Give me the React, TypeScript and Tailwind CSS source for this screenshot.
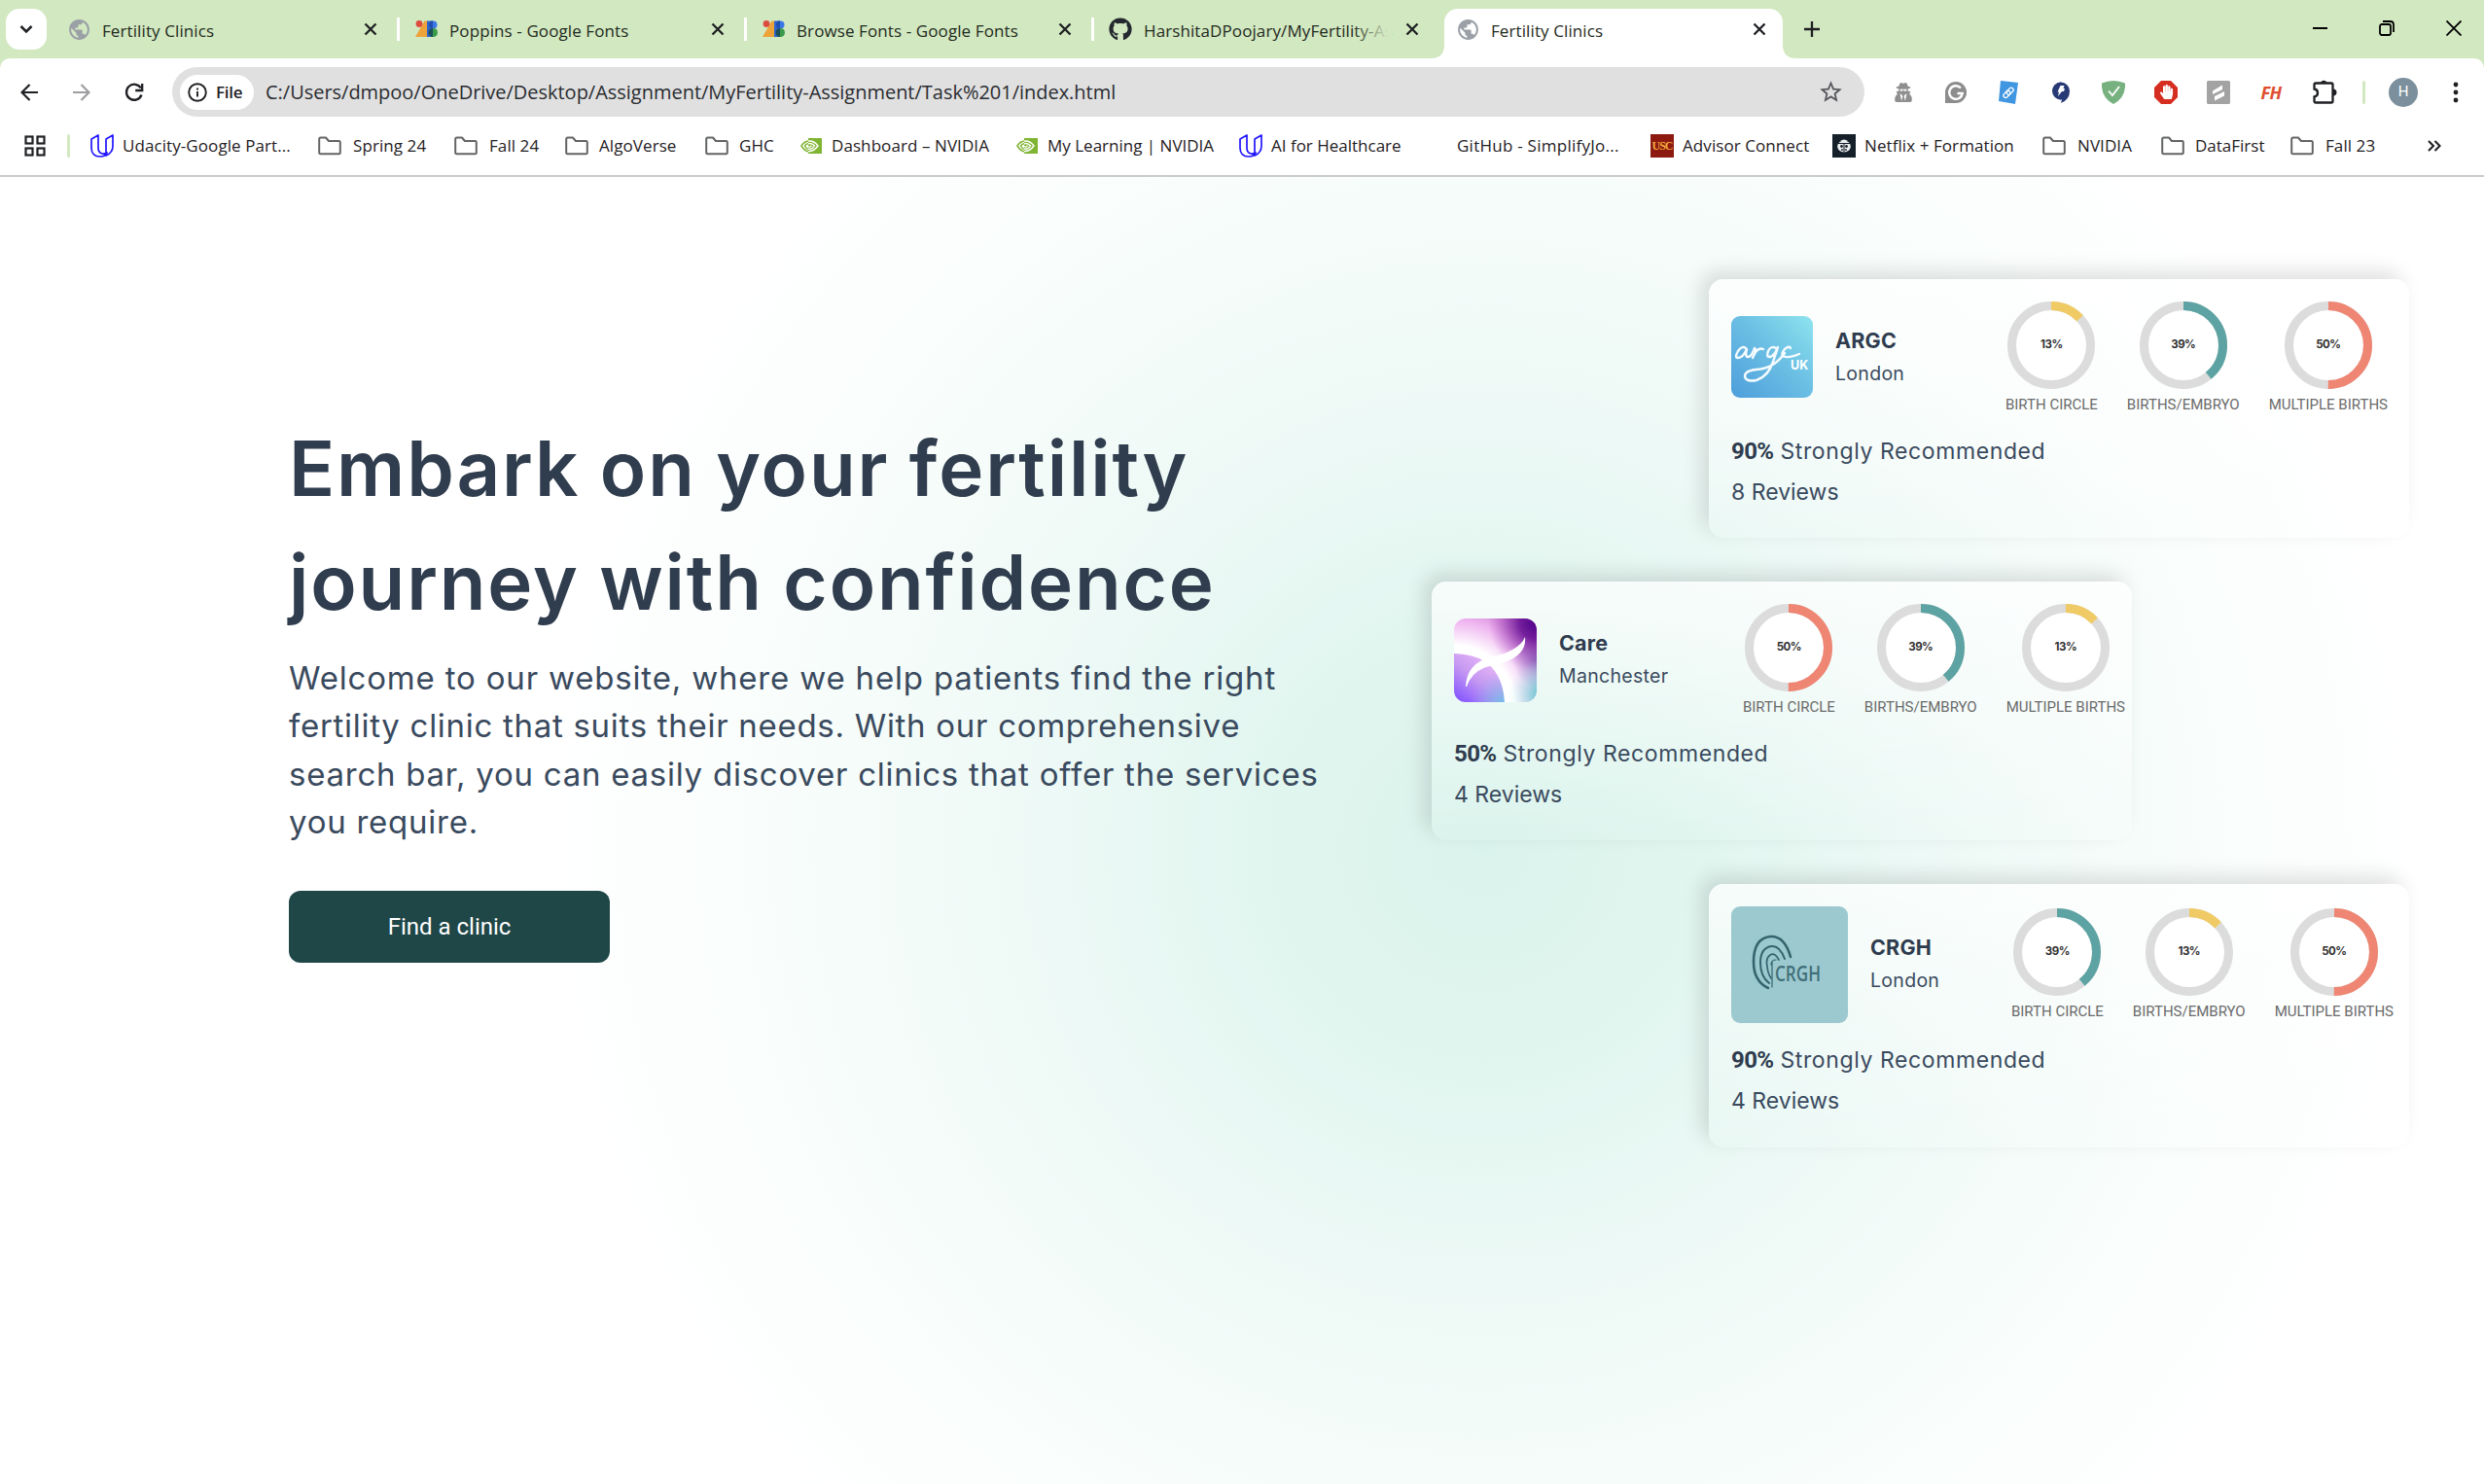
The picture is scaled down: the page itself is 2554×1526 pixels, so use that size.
import type { ReactNode } from "react";
import { FaGithub, FaUserSecret, FaHandPaper } from "react-icons/fa";
import { MdPublic, MdStarBorder } from "react-icons/md";

/* ---------- browser icons ---------- */

function Close() {
  return (
    <svg viewBox="0 0 14 14" className="size-[14px] shrink-0 text-[#1f2023]">
      <path d="M1.5 1.5l11 11M12.5 1.5l-11 11" stroke="currentColor" strokeWidth="2.3" fill="none" />
    </svg>
  );
}

function GoogleFontsIcon() {
  return (
    <svg viewBox="0 0 24 24" className="h-6 w-6 shrink-0">
      <path d="M9.500 3.500h3v16.500H0z" fill="#eda23a" />
      <circle cx="4" cy="6.500" r="3.400" fill="#dd4b3e" />
      <rect x="12" y="3.500" width="6" height="16.500" fill="#2f66cf" />
      <circle cx="18.500" cy="7.500" r="4" fill="#3b78e7" />
      <circle cx="18.500" cy="15.500" r="4.500" fill="#3a9a4b" />
      <path d="M18 11v9a4.500 4.500 0 010-9z" fill="#1d4f5a" />
      <path d="M18 3.500v8a4 4 0 010-8z" fill="#1f4fae" />
    </svg>
  );
}

function FolderIcon() {
  return (
    <svg viewBox="0 0 24 20" className="h-5 w-6 shrink-0" fill="none" stroke="#636466" strokeWidth="2" strokeLinejoin="round">
      <path d="M1.200 3q0-1.500 1.500-1.500H8l3 3.500h10.500q1.300 0 1.300 1.300V17q0 1.200-1.300 1.200h-19Q1.200 18.200 1.200 17z" />
    </svg>
  );
}

function UdacityIcon() {
  return (
    <svg viewBox="0 0 24 24" className="size-6 shrink-0" fill="none" stroke="#2015ff" strokeWidth="1.700" strokeLinejoin="round" strokeLinecap="round">
      <path d="M1 5l7-4v13q0 5 4 6 2 .500 5-1-1.500 4-7 4-9 0-9-9zM16 19V5l7-4v11q0 7-7 10" />
    </svg>
  );
}

function NvidiaIcon() {
  return (
    <svg viewBox="0 0 24 24" className="size-6 shrink-0" fill="none">
      <path d="M9 4h14v16H9z" fill="#80b534" />
      <path d="M9 6Q4 7 1 12q3 5 8 6.500z" fill="#fff" />
      <path d="M9.500 7Q4.500 7.500 2 12q3 5 7.500 6" stroke="#80b534" strokeWidth="1.600" />
      <path d="M9 7.200Q15 6.500 19 12q-4 5.500-10 5.800" stroke="#fff" strokeWidth="1.500" />
      <path d="M9.500 9.700Q6.500 10 5.500 12q1.500 3 4.500 3.300 3.500 0 5.500-3.300-2.500-3-6-2.300" stroke="#fff" strokeWidth="1.400" />
      <path d="M9 9.700Q6.500 10 5.500 12q1.500 3 3.500 3.300" stroke="#80b534" strokeWidth="1.500" />
      <path d="M9 12.500q2 1.500 3.500-.800" stroke="#fff" strokeWidth="1.300" />
    </svg>
  );
}

function UscIcon() {
  return (
    <span className="grid size-6 shrink-0 place-items-center bg-[#8c1a11] font-['Liberation_Serif'] text-[12px] font-bold tracking-[-1px] text-[#f2a93b]">
      USC
    </span>
  );
}

function NetflixFormationIcon() {
  return (
    <svg viewBox="0 0 24 24" className="size-6 shrink-0">
      <rect width="24" height="24" fill="#15202b" />
      <ellipse cx="12" cy="12.500" rx="6.800" ry="6" fill="#eceff1" />
      <path d="M8 7q4-3 8 0z" fill="#eceff1" />
      <path d="M6 9.500h12M12 9.500v9" stroke="#15202b" strokeWidth="1.100" />
      <circle cx="9.500" cy="12.500" r="1.400" fill="#15202b" />
      <circle cx="14.500" cy="12.500" r="1.400" fill="#15202b" />
      <circle cx="10" cy="16" r=".9" fill="#15202b" />
      <circle cx="14" cy="16" r=".9" fill="#15202b" />
    </svg>
  );
}

/* ---------- tab strip ---------- */

function Tab({ icon, title, fade = false, divider = true }: { icon: ReactNode; title: string; fade?: boolean; divider?: boolean }) {
  return (
    <div className="flex h-[42px] w-[357px] shrink-0 items-center">
      <span className="flex w-[35px] shrink-0">{icon}</span>
      <span className="relative mt-[3px] w-[251px] whitespace-nowrap">
        {title}
        {fade && <span className="absolute inset-y-0 -right-1 w-10 bg-gradient-to-r from-[#d2e8c1]/0 to-[#d2e8c1] to-90%" />}
      </span>
      <span className="ml-[18px]"><Close /></span>
      {divider && <span className="ml-[20px] h-6 w-[3px] bg-white" />}
    </div>
  );
}

function TabStrip() {
  const globe = <MdPublic className="-ml-px size-[25px] text-[#9aa0a6]" />;
  return (
    <div className="flex h-[60px] items-start bg-[#d2e8c1] pt-[9px] pl-[6px] text-[17px] tracking-[0.1px] text-[#1f2a20]">
      <span className="mr-[22px] grid size-[42px] shrink-0 place-items-center rounded-[14px] bg-white">
        <svg viewBox="0 0 14 10" className="mt-[-1px] h-[10px] w-[14px]">
          <path d="M1.500 2l5.500 5.500L12.500 2" fill="none" stroke="#1f2023" strokeWidth="2.500" />
        </svg>
      </span>
      <Tab icon={globe} title="Fertility Clinics" />
      <Tab icon={<GoogleFontsIcon />} title="Poppins - Google Fonts" />
      <Tab icon={<GoogleFontsIcon />} title="Browse Fonts - Google Fonts" />
      <Tab icon={<FaGithub className="ml-[-1px] size-6 text-[#24292f]" />} title="HarshitaDPoojary/MyFertility-As" fade divider={false} />
      <div className="relative -ml-[13px] h-[51px] w-[348px] shrink-0 rounded-t-[14px] bg-white pl-[13px]">
        <svg viewBox="0 0 14 14" className="absolute bottom-0 -left-[14px] size-[14px]"><path d="M14 0v14H0Q14 14 14 0z" fill="#fff" /></svg>
        <svg viewBox="0 0 14 14" className="absolute -right-[14px] bottom-0 size-[14px]"><path d="M0 0v14h14Q0 14 0 0z" fill="#fff" /></svg>
        <Tab icon={globe} title="Fertility Clinics" divider={false} />
      </div>
      <svg viewBox="0 0 16 16" className="mt-[13px] ml-[22px] size-4 shrink-0"><path d="M8 0v16M0 8h16" stroke="#1f2023" strokeWidth="2.300" /></svg>
      <div className="mt-[12px] mr-[23px] ml-auto flex items-center gap-[53px]">
        <svg viewBox="0 0 15 16" className="h-4 w-[15px]"><path d="M0 8h15" stroke="#000" strokeWidth="2" /></svg>
        <svg viewBox="0 0 16 16" className="size-4" fill="none" stroke="#000" strokeWidth="1.800">
          <rect x="1" y="4" width="11" height="11" rx="2" />
          <path d="M4 1h7.500q3.500 0 3.500 3.500V12" />
        </svg>
        <svg viewBox="0 0 16 16" className="size-4"><path d="M.5.5l15 15M15.500.5l-15 15" stroke="#000" strokeWidth="1.800" /></svg>
      </div>
    </div>
  );
}

/* ---------- toolbar ---------- */

function Extensions() {
  return (
    <div className="flex items-center gap-[30px]">
      <FaUserSecret className="size-6 p-[2px] text-[#8f8f8f]" />
      <svg viewBox="0 0 24 24" className="size-6">
        <path d="M12 1a11 11 0 0111 11 11 11 0 01-11 11H1V12A11 11 0 0112 1z" fill="#8d8d8d" />
        <path d="M17 7.500A6.800 6.800 0 1018.700 13H13.500" fill="none" stroke="#fff" strokeWidth="2.400" />
      </svg>
      <svg viewBox="0 0 24 24" className="size-6">
        <path d="M4 0l18 2-3 22-17-3z" fill="#4096e0" />
        <g transform="rotate(-45 12 12)" fill="none" stroke="#fff" strokeWidth="1.300">
          <rect x="5.500" y="10" width="8" height="4.500" rx="2.200" />
          <rect x="10" y="10" width="8" height="4.500" rx="2.200" />
        </g>
      </svg>
      <svg viewBox="0 0 24 24" className="size-6">
        <path d="M12 1.500a9 9 0 019 9q0 9-9 12.500l1-3.500a9 9 0 01-1-18z" fill="#283a75" />
        <path d="M12 1.500a9 9 0 000 18z" fill="#283a75" />
        <path d="M11.500 5h4l-1 3h1.500l-1 3h-2l-4 5 1-4.500H8.500z" fill="#fff" />
      </svg>
      <svg viewBox="0 0 24 24" className="size-6">
        <path d="M12 0q6 0 12 2.500Q25 17 12 24-1 17 0 2.500 6 0 12 0z" fill="#77b17f" />
        <path d="M7 10.500l4 4.500 7-9" fill="none" stroke="#fff" strokeWidth="1.800" />
      </svg>
      <span className="grid size-6 place-items-center">
        <svg viewBox="0 0 24 24" className="col-start-1 row-start-1 size-6"><path d="M7 0h10l7 7v10l-7 7H7l-7-7V7z" fill="#d52d20" /></svg>
        <FaHandPaper className="col-start-1 row-start-1 size-[15px] text-white" />
      </span>
      <svg viewBox="0 0 24 24" className="size-6">
        <rect width="24" height="24" rx="1.500" fill="#a3a3a3" />
        <path d="M6 10.500l10-6v4.500L6 14zM8 16l10-5v4.500l-10 5z" fill="#fff" />
      </svg>
      <span className="grid h-6 w-6 place-items-center font-['Open_Sans'] text-[18px] leading-6 font-bold tracking-[-0.5px] text-[#e04e32] italic">FH</span>
      <svg viewBox="0 0 26 26" className="h-[26px] w-[26px] -translate-y-px text-[#1f2023]">
        <path d="M4 4.500H20q1.500 0 1.500 1.500v17q0 1.500-1.500 1.500H4q-1.500 0-1.500-1.500v-4.500Q6 18 6 14.500T2.500 10.500V6Q2.500 4.500 4 4.500z" fill="none" stroke="currentColor" strokeWidth="2.300" />
        <path d="M9 4.500a3.300 3.300 0 016.500 0zM22 10.500a3.500 3.500 0 010 7z" fill="currentColor" />
      </svg>
    </div>
  );
}

function Toolbar() {
  return (
    <div className="bg-[#d2e8c1]">
      <div className="flex h-[69px] items-center rounded-t-[10px] bg-white pl-[21px]">
        <svg viewBox="0 0 18 18" className="size-[18px]" fill="none" stroke="#1f2023" strokeWidth="2.200"><path d="M18 9H2M9.500 1L1.500 9l8 8" /></svg>
        <svg viewBox="0 0 18 18" className="ml-[36px] size-[18px]" fill="none" stroke="#9d9ea0" strokeWidth="2.200"><path d="M0 9h16M8.500 1l8 8-8 8" /></svg>
        <svg viewBox="0 0 20 20" className="ml-[35px] size-5" fill="none" stroke="#1f2023" strokeWidth="2.300">
          <path d="M17.500 12.500A8 8 0 1116.800 5.500" />
          <path d="M18.200 1v7h-7" />
        </svg>
        <div className="ml-[29px] flex h-[51px] w-[1740px] items-center rounded-full bg-[#e0e0e0] pr-[21px] pl-[8px]">
          <span className="flex h-[36px] w-[76px] items-center rounded-full bg-white pl-[8px]">
            <svg viewBox="0 0 20 20" className="size-5" fill="none" stroke="#1f2023" strokeWidth="1.900">
              <circle cx="10" cy="10" r="8.800" />
              <path d="M10 9v5.500M10 5.500v2" />
            </svg>
            <span className="ml-[9px] text-[17px] font-semibold tracking-[-0.3px] text-[#1f2023]">File</span>
          </span>
          <span className="ml-[12px] text-[20px] tracking-[-0.02px] text-[#2a2c30]">C:/Users/dmpoo/OneDrive/Desktop/Assignment/MyFertility-Assignment/Task%201/index.html</span>
          <MdStarBorder className="ml-auto size-[27px] text-[#55575b]" />
        </div>
        <div className="ml-[28px]"><Extensions /></div>
        <span className="ml-[26px] h-6 w-[3px] rounded bg-[#d2e8c1]" />
        <span className="ml-[24px] grid size-[30px] place-items-center rounded-full bg-[#7b8f9c] font-[Roboto] text-[15px] text-white">H</span>
        <svg viewBox="0 0 6 22" className="ml-[36px] h-[22px] w-[6px]" fill="#1f2023">
          <circle cx="3" cy="3" r="2.400" /><circle cx="3" cy="11" r="2.400" /><circle cx="3" cy="19" r="2.400" />
        </svg>
      </div>
    </div>
  );
}

/* ---------- bookmarks ---------- */

function Bookmark({ icon, label, width }: { icon: ReactNode; label: string; width: string }) {
  return (
    <div className={`flex shrink-0 items-center whitespace-nowrap ${width}`}>
      {icon}
      {label}
    </div>
  );
}

function Bookmarks() {
  return (
    <div className="flex h-[53px] items-center border-b-2 border-[#cbcbcb] bg-white pb-[9px] pl-[25px] text-[17px] tracking-[0.08px] text-[#1f2023]">
      <svg viewBox="0 0 22 22" className="size-[22px] shrink-0" fill="none" stroke="#1f2023" strokeWidth="2.200">
        <rect x="1.500" y="1.500" width="7" height="7" /><rect x="13.500" y="1.500" width="7" height="7" />
        <rect x="1.500" y="13.500" width="7" height="7" /><rect x="13.500" y="13.500" width="7" height="7" />
      </svg>
      <span className="mr-[21px] ml-[22px] h-6 w-[3px] shrink-0 rounded bg-[#d2e8c1]" />
      <Bookmark icon={<UdacityIcon />} label="Udacity-Google Part..." width="w-[234px] gap-[9px]" />
      <Bookmark icon={<FolderIcon />} label="Spring 24" width="w-[140px] gap-[12px]" />
      <Bookmark icon={<FolderIcon />} label="Fall 24" width="w-[114px] gap-[12px]" />
      <Bookmark icon={<FolderIcon />} label="AlgoVerse" width="w-[144px] gap-[11px]" />
      <Bookmark icon={<FolderIcon />} label="GHC" width="w-[97px] gap-[11px]" />
      <Bookmark icon={<NvidiaIcon />} label="Dashboard – NVIDIA" width="w-[222px] gap-[9px]" />
      <Bookmark icon={<NvidiaIcon />} label="My Learning | NVIDIA" width="w-[230px] gap-[9px] tracking-normal" />
      <Bookmark icon={<UdacityIcon />} label="AI for Healthcare" width="w-[190px] gap-[9px] tracking-normal" />
      <Bookmark icon={<span className="w-6" />} label="GitHub - SimplifyJo..." width="w-[233px] gap-[10px] tracking-[0.25px]" />
      <Bookmark icon={<UscIcon />} label="Advisor Connect" width="w-[187px] gap-[9px]" />
      <Bookmark icon={<NetflixFormationIcon />} label="Netflix + Formation" width="w-[216px] gap-[9px]" />
      <Bookmark icon={<FolderIcon />} label="NVIDIA" width="w-[122px] gap-[12px]" />
      <Bookmark icon={<FolderIcon />} label="DataFirst" width="w-[133px] gap-[11px] tracking-normal" />
      <Bookmark icon={<FolderIcon />} label="Fall 23" width="w-[141px] gap-[12px]" />
      <svg viewBox="0 0 14 12" className="h-3 w-[14px]" fill="none" stroke="#1f2023" strokeWidth="2.100"><path d="M1 1l5 5-5 5M7.500 1l5 5-5 5" /></svg>
    </div>
  );
}

/* ---------- clinic logos ---------- */

function ArgcLogo() {
  return (
    <svg viewBox="0 0 84 84" className="mt-[-2px] size-[84px] shrink-0 rounded-[9px]">
      <defs>
        <linearGradient id="argc" x1="0" y1="1" x2="1" y2="0">
          <stop offset="0" stopColor="#4d9edb" />
          <stop offset=".55" stopColor="#6cc0e4" />
          <stop offset="1" stopColor="#8ee4ee" />
        </linearGradient>
      </defs>
      <rect width="84" height="84" fill="url(#argc)" />
      <g fill="none" stroke="#f4fbff" strokeWidth="2.400" strokeLinecap="round" strokeLinejoin="round">
        <path d="M15 33q-4-3-8 3-4 7 0 7 5 0 9-9-2 8 1 8 4 0 7-9 2 1 1 4 4-5 8-3" />
        <path d="M25 37l-3 6M46 33q-5-3-8 3-2 6 1 6 5 0 9-10l-5 15q-5 15-17 19-11 2-12-4 0-6 12-7 18-1 29-17" />
        <path d="M61 33q-1-3-6 1-4 5-2 7 5 3 17-2" />
      </g>
      <text x="61" y="55" fill="#fff" className="font-[Inter] text-[12.5px] font-bold">UK</text>
    </svg>
  );
}

function CareLogo() {
  return (
    <svg viewBox="0 0 85 86" className="h-[86px] w-[85px] shrink-0 rounded-[12px]">
      <defs>
        <radialGradient id="careTop" gradientUnits="userSpaceOnUse" cx="0" cy="90" r="125">
          <stop offset=".5" stopColor="#ffffff" />
          <stop offset=".7" stopColor="#efb6f0" />
          <stop offset="1" stopColor="#b04cb8" />
        </radialGradient>
        <radialGradient id="carePurple" gradientUnits="userSpaceOnUse" cx="85" cy="4" r="50">
          <stop offset="0" stopColor="#4b0088" />
          <stop offset=".35" stopColor="#6a1496" stopOpacity=".9" />
          <stop offset="1" stopColor="#b14fc0" stopOpacity="0" />
        </radialGradient>
        <radialGradient id="careTeal" gradientUnits="userSpaceOnUse" cx="92" cy="78" r="36">
          <stop offset="0" stopColor="#43c6c6" />
          <stop offset="1" stopColor="#b5e9ea" stopOpacity="0" />
        </radialGradient>
        <radialGradient id="careEdge" gradientUnits="userSpaceOnUse" cx="90" cy="42" r="30">
          <stop offset="0" stopColor="#6a5fb0" stopOpacity=".9" />
          <stop offset="1" stopColor="#8a7ac0" stopOpacity="0" />
        </radialGradient>
        <linearGradient id="careDisc" x1="0" y1="1" x2=".8" y2="0">
          <stop offset="0" stopColor="#7c4dff" />
          <stop offset=".5" stopColor="#c79af2" />
          <stop offset="1" stopColor="#f3c0f7" />
        </linearGradient>
        <radialGradient id="careBlue" gradientUnits="userSpaceOnUse" cx="52" cy="88" r="34">
          <stop offset="0" stopColor="#6ebfe6" />
          <stop offset="1" stopColor="#8fa8ee" stopOpacity="0" />
        </radialGradient>
      </defs>
      <rect width="85" height="86" fill="url(#careTop)" />
      <rect width="85" height="86" fill="url(#careEdge)" />
      <rect width="85" height="86" fill="url(#carePurple)" />
      <rect width="85" height="86" fill="url(#careTeal)" />
      <path d="M0 35Q50 36 53 86H0z" fill="url(#careDisc)" />
      <path d="M0 35Q50 36 53 86H0z" fill="url(#careBlue)" />
      <path d="M0 35Q50 36 53 86" fill="none" stroke="#fff" strokeWidth="2" />
      <path d="M12 70Q13 48 34 41 67 34 73 19 75 37 52 45 40 48 33 50 18 55 13 70z" fill="#fff" />
    </svg>
  );
}

function CrghLogo() {
  return (
    <svg viewBox="0 0 120 120" className="size-[120px] shrink-0 rounded-[9px]">
      <rect width="120" height="120" fill="#9cc9cf" />
      <g fill="none" stroke="#35646f" strokeLinecap="round">
        <path d="M61 52Q55 30 40 31 23 33 23 57q0 20 15 27" strokeWidth="2.600" />
        <path d="M55 54Q50 40 41 41 30 43 30 58q0 14 9 21" strokeWidth="2" />
        <path d="M49 55q-4-8-9-5-5 4-3 12 1 8 4 12" strokeWidth="1.700" />
        <path d="M42 57v26M46 55q-5 0-5 5" strokeWidth="1.200" />
      </g>
      <text x="45" y="77" fill="#416f79" textLength="47" lengthAdjust="spacingAndGlyphs" className="font-['Open_Sans'] text-[21px] font-semibold">CRGH</text>
    </svg>
  );
}

/* ---------- clinic cards ---------- */

const YELLOW = "#f0cb65";
const TEAL = "#5ea3a3";
const CORAL = "#ef8673";

function Donut({ value, color, label }: { value: number; color: string; label: string }) {
  const c = 2 * Math.PI * 40.5;
  return (
    <div className="flex flex-col items-center">
      <div className="grid size-[90px] place-items-center">
        <svg viewBox="0 0 90 90" className="col-start-1 row-start-1 size-[90px]">
          <circle cx="45" cy="45" r="40.500" fill="#fff" stroke="#dcdcdc" strokeWidth="9" />
          <circle cx="45" cy="45" r="40.500" fill="none" stroke={color} strokeWidth="9" strokeDasharray={`${(c * value) / 100} ${c}`} transform="rotate(-90 45 45)" />
        </svg>
        <span className="relative col-start-1 row-start-1 text-[11.5px] font-bold tracking-[-0.5px] text-[#333]">{value}%</span>
      </div>
      <span className="mt-[6px] font-[Roboto] text-[15px] leading-5 whitespace-nowrap text-[#6b6b6b]">{label}</span>
    </div>
  );
}

interface Stat { value: number; color: string }

function ClinicCard({ logo, name, city, stats, score, reviews, className }: {
  logo: ReactNode; name: string; city: string; stats: [Stat, Stat, Stat]; score: string; reviews: number; className: string;
}) {
  const labels = ["BIRTH CIRCLE", "BIRTHS/EMBRYO", "MULTIPLE BIRTHS"];
  return (
    <article className={`w-[720px] rounded-[15px] bg-gradient-to-b from-white/70 to-white/0 pt-[23px] pl-[23px] text-[#3a4a5e] shadow-[-8px_-8px_20px_rgba(0,0,0,0.12)] ${className}`}>
      <div className="flex items-center">
        {logo}
        <div className="-mt-[3px] ml-[23px] leading-[34px]">
          <div className="text-[21.5px] font-bold tracking-[0.2px] text-[#2f3c4e]">{name}</div>
          <div className="text-[19.5px] tracking-[0.3px]">{city}</div>
        </div>
        <div className="ml-auto flex gap-[30px]">
          {stats.map((s, i) => <Donut key={i} value={s.value} color={s.color} label={labels[i]} />)}
        </div>
      </div>
      <div className="mt-[18px] text-[23px] leading-[41.500px]">
        <p className="tracking-[0.6px]">
          <b className="mr-[7px] font-[Roboto] text-[24px] font-bold tracking-[-0.6px] text-[#2f3c4e]">{score}</b>
          Strongly Recommended
        </p>
        <p>{reviews} Reviews</p>
      </div>
    </article>
  );
}

function Hero() {
  return (
    <main className="flex h-[1344px] justify-between bg-[radial-gradient(circle_at_1525px_690px,#daf3ec_0px,#dff5ee_180px,#edf9f6_450px,#f8fdfb_720px,#ffffff_980px)] pr-[77px] pl-[297px] font-[Inter]">
      <section className="w-[1110px] pt-[241px]">
        <h1 className="text-[78px] leading-[117px] font-semibold tracking-[1.85px] [word-spacing:-1px] whitespace-nowrap text-[#303d4e]">
          Embark on your fertility
          <br />
          journey with confidence
        </h1>
        <p className="mt-[16px] text-[33px] leading-[49.3px] tracking-[0.75px] whitespace-nowrap text-[#3a4a5e]">
          <span className="tracking-[0.82px]">Welcome to our website, where we help patients find the right</span>
          <br />
          <span className="tracking-[0.71px]">fertility clinic that suits their needs. With our comprehensive</span>
          <br />
          search bar, you can easily discover clinics that offer the services
          <br />
          you require.
        </p>
        <button className="mt-[46px] h-[74px] w-[330px] rounded-[12px] bg-[#1f4747] font-[Roboto] text-[24px] font-normal text-white">
          Find a clinic
        </button>
      </section>
      <section className="flex w-[1005px] flex-col gap-[45px] pt-[105px]">
        <ClinicCard
          className="h-[266px] self-end pr-[22px]"
          logo={<ArgcLogo />} name="ARGC" city="London" score="90%" reviews={8}
          stats={[{ value: 13, color: YELLOW }, { value: 39, color: TEAL }, { value: 50, color: CORAL }]}
        />
        <ClinicCard
          className="h-[266px] self-start pr-[7px]"
          logo={<CareLogo />} name="Care" city="Manchester" score="50%" reviews={4}
          stats={[{ value: 50, color: CORAL }, { value: 39, color: TEAL }, { value: 13, color: YELLOW }]}
        />
        <ClinicCard
          className="h-[271px] self-end pr-[16px]"
          logo={<CrghLogo />} name="CRGH" city="London" score="90%" reviews={4}
          stats={[{ value: 39, color: TEAL }, { value: 13, color: YELLOW }, { value: 50, color: CORAL }]}
        />
      </section>
    </main>
  );
}

export default function App() {
  return (
    <div className="h-[1526px] w-[2554px] overflow-hidden bg-white font-['Open_Sans']">
      <TabStrip />
      <Toolbar />
      <Bookmarks />
      <Hero />
    </div>
  );
}
